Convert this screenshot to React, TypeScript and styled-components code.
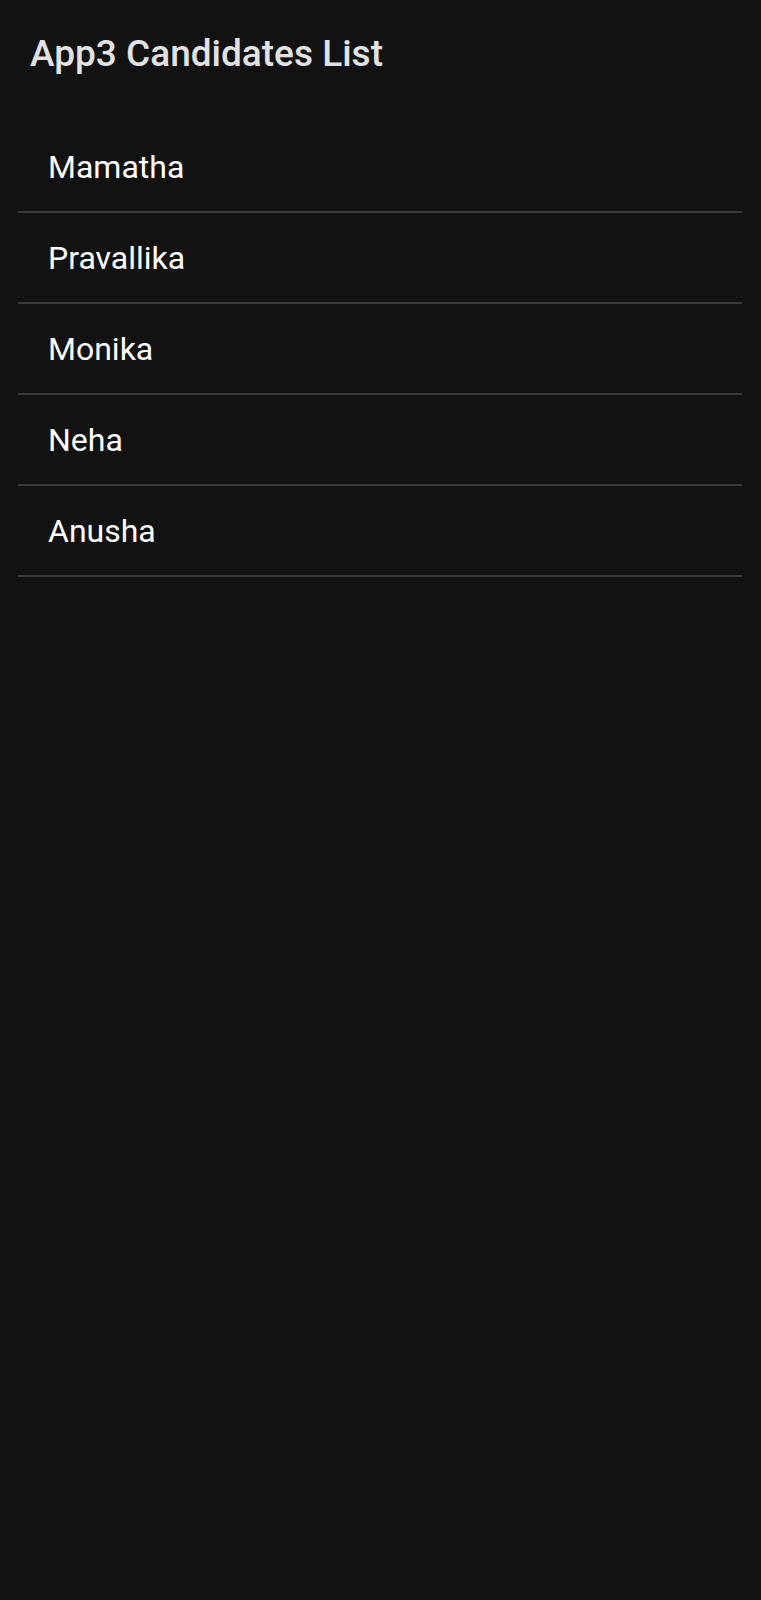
import React from "react";
import styled, { createGlobalStyle } from "styled-components";

const GlobalStyle = createGlobalStyle`
  html, body {
    margin: 0;
    padding: 0;
    background: #121212;
  }
  body {
    font-family: Roboto, "Noto Sans", "Liberation Sans", sans-serif;
    min-height: 1600px;
  }
`;

const Screen = styled.div`
  min-height: 1600px;
  background: #121212;
  display: flex;
  flex-direction: column;
`;

const Header = styled.header`
  padding: 29px 28px 0 30px;
  height: 122px;
  box-sizing: border-box;
`;

const Title = styled.h1`
  margin: 0;
  font-size: 37px;
  line-height: 50px;
  font-weight: 500;
  color: #e2e2e2;
`;

const List = styled.ul`
  list-style: none;
  margin: 0 19px 0 18px;
  padding: 0;
  display: flex;
  flex-direction: column;
`;

const Row = styled.li`
  height: 91px;
  box-sizing: border-box;
  border-bottom: 2px solid #3a3a3a;
  display: flex;
  align-items: center;
  padding: 0 30px;
  font-size: 32px;
  font-weight: 400;
  color: #ffffff;
`;

const candidates = ["Mamatha", "Pravallika", "Monika", "Neha", "Anusha"];

export default function App() {
  return (
    <>
      <GlobalStyle />
      <Screen>
        <Header>
          <Title>App3 Candidates List</Title>
        </Header>
        <List>
          {candidates.map((name) => (
            <Row key={name}>{name}</Row>
          ))}
        </List>
      </Screen>
    </>
  );
}
